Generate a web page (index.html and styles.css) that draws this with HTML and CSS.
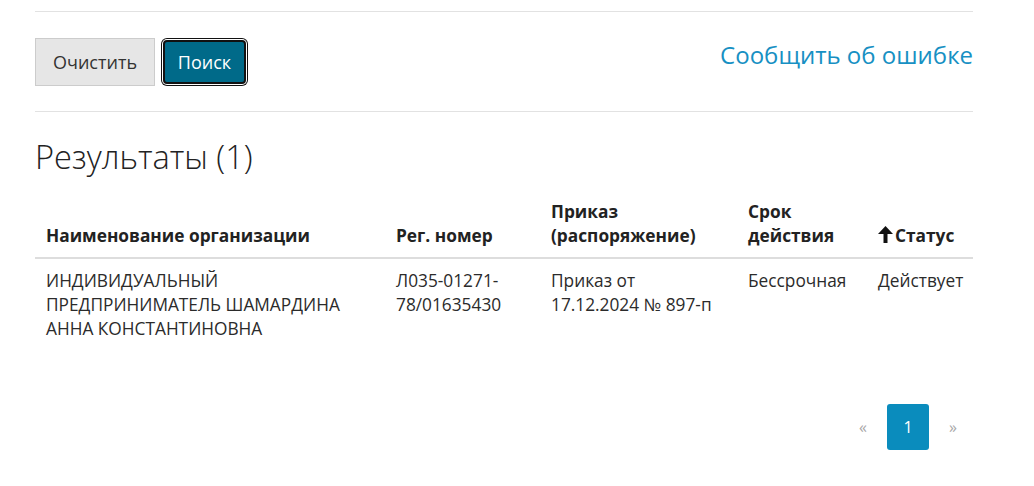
FILE: index.html
```html
<!DOCTYPE html>
<html lang="ru">
<head>
<meta charset="utf-8">
<title>Результаты</title>
<link rel="stylesheet" href="styles.css">
</head>
<body>
<div class="container">
  <hr class="rule rule-top">
  <div class="actions">
    <div class="buttons">
      <button class="btn btn-clear" type="button">Очистить</button>
      <button class="btn btn-search" type="button">Поиск</button>
    </div>
    <a class="report-link" href="#">Сообщить об ошибке</a>
  </div>
  <hr class="rule">
  <h2 class="results-title">Результаты (1)</h2>
  <table class="results">
    <thead>
      <tr>
        <th class="col-name">Наименование организации</th>
        <th class="col-reg">Рег. номер</th>
        <th class="col-order">Приказ (распоряжение)</th>
        <th class="col-term">Срок действия</th>
        <th class="col-status"><svg class="sort-icon" width="15" height="17" viewBox="0 0 15 17"><path d="M7.5 0 L15 8 L9.5 8 L9.5 17 L5.5 17 L5.5 8 L0 8 Z" fill="#111"/></svg>Статус</th>
      </tr>
    </thead>
    <tbody>
      <tr>
        <td>ИНДИВИДУАЛЬНЫЙ ПРЕДПРИНИМАТЕЛЬ ШАМАРДИНА АННА КОНСТАНТИНОВНА</td>
        <td>Л035-01271-78/01635430</td>
        <td>Приказ от 17.12.2024 № 897-п</td>
        <td>Бессрочная</td>
        <td>Действует</td>
      </tr>
    </tbody>
  </table>
  <nav class="pager">
    <span class="page page-arrow">«</span>
    <span class="page page-active">1</span>
    <span class="page page-arrow">»</span>
  </nav>
</div>
</body>
</html>
```

FILE: styles.css
```css
* { box-sizing: border-box; }
body {
  margin: 0;
  font-family: "Open Sans", "Liberation Sans", sans-serif;
  color: #2b2b2b;
  background: #fff;
}
.container {
  width: 938px;
  margin-left: 35px;
}
.rule {
  border: 0;
  border-top: 1px solid #e2e2e2;
  margin: 0;
}
.rule-top { margin-top: 11px; }
.actions {
  display: flex;
  justify-content: space-between;
  align-items: flex-start;
  padding: 26px 0 25px;
}
.buttons {
  display: flex;
  gap: 7px;
}
.btn {
  height: 48px;
  font-family: inherit;
  font-size: 18px;
  padding: 0 16px;
  cursor: pointer;
}
.btn-clear {
  background: #e6e6e6;
  border: 1px solid #cccccc;
  color: #333;
  width: 120px;
}
.btn-search {
  background: #006a89;
  color: #fff;
  border: 2px solid #111;
  border-radius: 4px;
  width: 83px;
  height: 44px;
  margin: 2px 2px 2px 1px;
  padding: 0;
  box-shadow: 0 0 0 1px #fff, 0 0 0 2px #111;
}
.report-link {
  font-size: 24px;
  color: #1790c3;
  text-decoration: none;
  line-height: 34px;
}
.results-title {
  font-size: 32.6px;
  font-weight: 300;
  line-height: 37px;
  margin: 26px 0 17px;
  color: #222;
}
.results {
  width: 100%;
  table-layout: fixed;
  border-collapse: collapse;
  font-size: 17.3px;
  line-height: 24.3px;
}
.results th {
  text-align: left;
  font-weight: 700;
  color: #222;
  vertical-align: bottom;
  padding: 8px 11px 8px;
  border-bottom: 2px solid #dddddd;
}
.results td {
  vertical-align: top;
  padding: 10px 11px;
  color: #2b2b2b;
}
.col-name { width: 350px; }
.col-reg { width: 155px; }
.col-order { width: 197px; }
.col-term { width: 130px; }
.col-status { width: 106px; white-space: nowrap; }
.sort-icon {
  vertical-align: -1px;
  margin-right: 2px;
}
.pager {
  display: flex;
  justify-content: flex-end;
  margin-top: 53px;
  margin-right: -4px;
}
.page {
  display: flex;
  align-items: center;
  justify-content: center;
  width: 48px;
  height: 46px;
  font-size: 16px;
}
.page-arrow {
  color: #a8a8a8;
  font-size: 16px;
}
.page-active {
  width: 42px;
  background: #0a8cbd;
  color: #fff;
  border-radius: 3px;
}
```
